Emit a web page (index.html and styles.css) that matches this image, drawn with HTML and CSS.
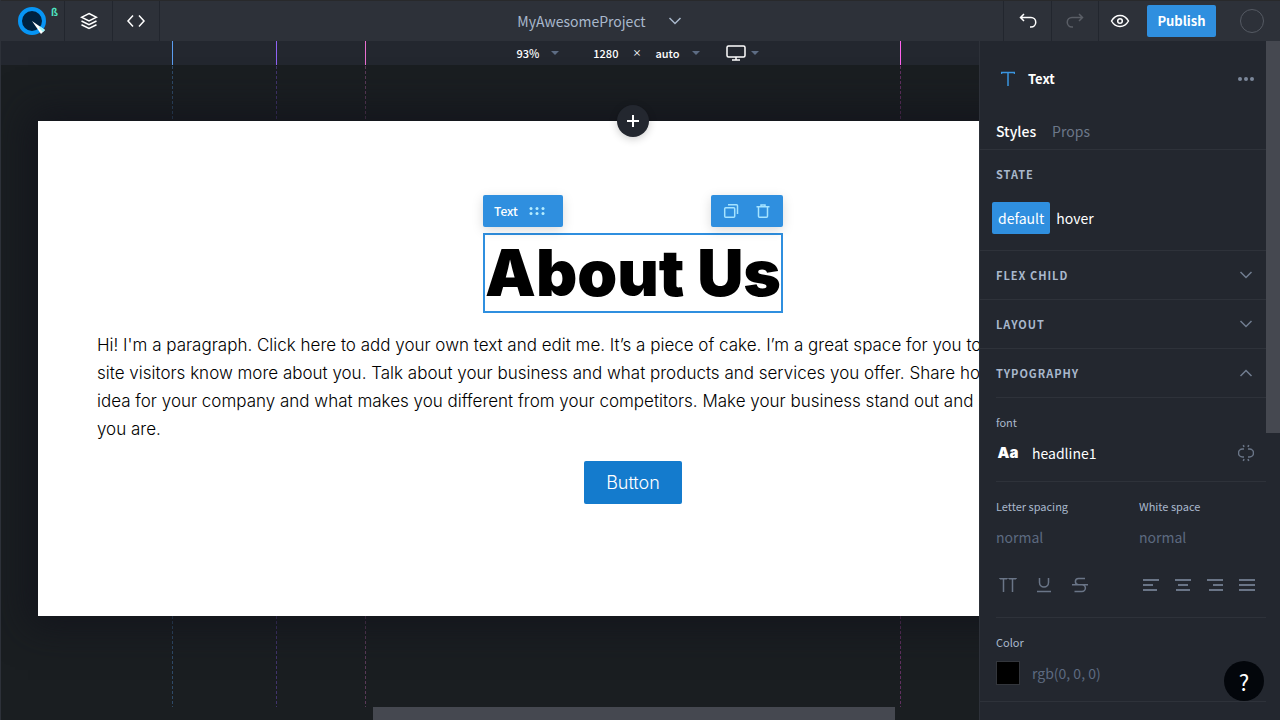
FILE: index.html
```html
<!DOCTYPE html>
<html lang="en">
<head>
    <meta charset="UTF-8" />
    <meta name="viewport" content="width=device-width, initial-scale=1" />
    <title>MyAwesomeProject</title>
    <link rel="stylesheet" href="styles.css">
</head>
<body>

<header class="topbar">
    <a class="logo" href="#" aria-label="Home">
        <svg width="32" height="32" viewBox="0 0 32 32">
            <circle cx="16" cy="16" r="12" fill="#00213f" stroke="#0795f5" stroke-width="4" />
            <path d="M16 16l13 9-4 4z" fill="#fff" />
            <path d="M24 21.500l5 3.500-2 2-4-4z" fill="#9df6fa" />
        </svg>
        <span class="beta">ß</span>
    </a>
    <button class="tool layers" aria-label="Layers">
        <svg width="18" height="18" viewBox="0 0 18 18">
            <path d="M9 1.500l7.500 3.750L9 9 1.500 5.250zM1.500 9L9 12.750 16.500 9M1.500 12.750L9 16.500l7.500-3.750" />
        </svg>
    </button>
    <button class="tool code" aria-label="Code">
        <svg width="20" height="16" viewBox="0 0 20 16">
            <path d="M7 2.500L2 8l5 5.500M13 2.500L18 8l-5 5.500" />
        </svg>
    </button>

    <div class="project">
        <button class="project-name">MyAwesomeProject</button>
        <svg class="project-arrow" width="14" height="8" viewBox="0 0 14 8">
            <path d="M1.500 1L7 6.500 12.500 1" />
        </svg>
    </div>

    <button class="tool undo" aria-label="Undo">
        <svg width="18" height="16" viewBox="0 0 18 16">
            <path d="M5 1L1.500 4.500 5 8M1.500 4.500H12a4.500 4.500 0 0 1 0 9.500h-1" />
        </svg>
    </button>
    <button class="tool redo" aria-label="Redo" disabled>
        <svg width="18" height="16" viewBox="0 0 18 16">
            <path d="M13 1l3.500 3.500L13 8M16.500 4.500H6A4.500 4.500 0 0 0 6 14h1" />
        </svg>
    </button>
    <button class="tool preview" aria-label="Preview">
        <svg width="20" height="14" viewBox="0 0 20 14">
            <path d="M1.500 7C3.500 3.500 6.500 1.500 10 1.500S16.500 3.500 18.500 7c-2 3.500-5 5.500-8.500 5.500S3.500 10.500 1.500 7z" />
            <circle cx="10" cy="7" r="2.300" />
        </svg>
    </button>
    <button class="publish">Publish</button>
    <button class="avatar" aria-label="Account"></button>
</header>

<div class="sizebar">
    <button class="size-item zoom">93%<i class="caret"></i></button>
    <div class="size-item dims">
        <span>1280</span>
        <span class="times">×</span>
        <button class="size-item">auto<i class="caret"></i></button>
    </div>
    <button class="size-item device" aria-label="Device">
        <svg width="20" height="16" viewBox="0 0 20 16">
            <rect x="1" y="1" width="18" height="11" rx="1.500" />
            <path d="M10 12v2.500M6 15h8" />
        </svg>
        <i class="caret"></i>
    </button>
</div>

<main class="stage">
    <div class="guide guide-blue"></div>
    <div class="guide guide-violet"></div>
    <div class="guide guide-pink"></div>
    <div class="guide guide-magenta"></div>

    <section class="frame">
        <button class="add" aria-label="Add section">
            <svg width="12" height="12" viewBox="0 0 12 12"><path d="M6 0v12M0 6h12" /></svg>
        </button>

        <div class="selected">
            <div class="tag">
                Text
                <svg width="16" height="8" viewBox="0 0 16 8">
                    <circle cx="2" cy="1.500" r="1.500" /><circle cx="8" cy="1.500" r="1.500" /><circle cx="14" cy="1.500" r="1.500" />
                    <circle cx="2" cy="6.500" r="1.500" /><circle cx="8" cy="6.500" r="1.500" /><circle cx="14" cy="6.500" r="1.500" />
                </svg>
            </div>
            <div class="actions">
                <button aria-label="Duplicate">
                    <svg width="16" height="16" viewBox="0 0 16 16">
                        <rect x="1.700" y="4.700" width="10" height="9.600" rx="1" />
                        <path d="M5 1.700h8.500a1 1 0 0 1 1 1V11" />
                    </svg>
                </button>
                <button aria-label="Delete">
                    <svg width="16" height="16" viewBox="0 0 16 16">
                        <path d="M1.500 3.700h13M3.500 4v9.300a1 1 0 0 0 1 1h7a1 1 0 0 0 1-1V4M6 3.500V2h4v1.500" />
                    </svg>
                </button>
            </div>
            <h1>About Us</h1>
        </div>

        <p>
            Hi! I'm a paragraph. Click here to add your own text and edit me. It’s a piece of cake. I’m a great space for you to tell your story and let your<br />
            site visitors know more about you. Talk about your business and what products and services you offer. Share how you came up with the<br />
            idea for your company and what makes you different from your competitors. Make your business stand out and show your visitors who<br />
            you are.
        </p>

        <button class="cta">Button</button>
    </section>
</main>
<div class="hscroll"><div class="hthumb"></div></div>

<aside class="panel">
    <div class="panel-body">
        <div class="panel-head">
            <svg width="14" height="16" viewBox="0 0 14 16"><path d="M.5 3V1.500h13V3M7 1.500V15" /></svg>
            <strong>Text</strong>
            <button class="more" aria-label="More">
                <svg width="16" height="4" viewBox="0 0 16 4">
                    <circle cx="2" cy="2" r="2" /><circle cx="8" cy="2" r="2" /><circle cx="14" cy="2" r="2" />
                </svg>
            </button>
        </div>

        <nav class="tabs">
            <a class="active" href="#styles">Styles</a>
            <a href="#props">Props</a>
        </nav>

        <section class="state">
            <h2>State</h2>
            <div class="states">
                <button class="on">default</button>
                <button>hover</button>
            </div>
        </section>

        <button class="fold">Flex child
            <svg width="14" height="8" viewBox="0 0 14 8"><path d="M1.500 1L7 6.500 12.500 1" /></svg>
        </button>
        <button class="fold">Layout
            <svg width="14" height="8" viewBox="0 0 14 8"><path d="M1.500 1L7 6.500 12.500 1" /></svg>
        </button>
        <button class="fold open">Typography
            <svg width="14" height="8" viewBox="0 0 14 8"><path d="M1.500 7L7 1.500 12.500 7" /></svg>
        </button>

        <section class="typo">
            <div class="group">
                <label for="font">font</label>
                <div class="row font-row">
                    <span class="aa">Aa</span>
                    <input class="bright" id="font" type="text" value="headline1" />
                    <button aria-label="Unlink">
                        <svg width="16" height="18" viewBox="0 0 16 18">
                            <path d="M6 5H4.500a4 4 0 0 0 0 8H6M10 5h1.500a4 4 0 0 1 0 8H10M5.300 1l.7 2M10.700 1L10 3M5.300 17l.7-2M10.700 17l-.7-2" />
                        </svg>
                    </button>
                </div>
            </div>

            <div class="group spacing">
                <div class="pair">
                    <div>
                        <label for="letter">Letter spacing</label>
                        <input id="letter" type="text" value="normal" />
                    </div>
                    <div>
                        <label for="white">White space</label>
                        <input id="white" type="text" value="normal" />
                    </div>
                </div>
                <div class="icons">
                    <div class="decor">
                        <button aria-label="Uppercase"><svg width="18" height="16" viewBox="0 0 18 16"><path d="M1 2V1.700h7V2M4.500 1.700V15M10 2V1.700h7V2M13.500 1.700V15" /></svg></button>
                        <button aria-label="Underline"><svg width="18" height="16" viewBox="0 0 18 16"><path d="M4.500 1v4.500a4.500 4.500 0 0 0 9 0V1M2 14.500h14" /></svg></button>
                        <button aria-label="Strikethrough"><svg width="18" height="16" viewBox="0 0 18 16"><path d="M14 1.500H7.500a3 3 0 0 0 0 6.200H11a3 3 0 0 1 0 6.800H3.500M1 7.700h16" /></svg></button>
                    </div>
                    <div class="align">
                        <button aria-label="Align left"><svg width="16" height="14" viewBox="0 0 16 14"><path d="M0 2h16M0 7h10M0 12h14" /></svg></button>
                        <button aria-label="Align center"><svg width="16" height="14" viewBox="0 0 16 14"><path d="M0 2h16M3 7h10M1 12h14" /></svg></button>
                        <button aria-label="Align right"><svg width="16" height="14" viewBox="0 0 16 14"><path d="M0 2h16M6 7h10M2 12h14" /></svg></button>
                        <button aria-label="Justify"><svg width="16" height="14" viewBox="0 0 16 14"><path d="M0 2h16M0 7h16M0 12h16" /></svg></button>
                    </div>
                </div>
            </div>

            <div class="group">
                <label for="color">Color</label>
                <div class="row">
                    <span class="swatch"></span>
                    <input id="color" type="text" value="rgb(0, 0, 0)" />
                </div>
            </div>
        </section>
    </div>
    <div class="vscroll"><div class="vthumb"></div></div>
</aside>

<button class="help" aria-label="Help">?</button>

</body>
</html>
```
FILE: styles.css
```css
* {
    box-sizing: border-box;
}

body {
    margin: 0;
    height: 100vh;
    display: flex;
    flex-direction: column;
    overflow: hidden;
    position: relative;
    background-color: #1a1e21;
    border-left: 1px solid #2d3139;
    color: #fff;
    font-family: "Noto Sans CJK SC", "Open Sans", sans-serif;
    font-size: 14px;
    line-height: 20px;
}

button,
input {
    background: none;
    border: 0;
    padding: 0;
    margin: 0;
    color: inherit;
    font: inherit;
}

button {
    cursor: pointer;
}

svg {
    display: block;
    flex: none;
    fill: none;
    stroke: currentColor;
    stroke-width: 1.5px;
}

/* top bar */
.topbar {
    display: flex;
    align-items: stretch;
    flex: none;
    height: 41px;
    border-top: 1px solid #28292b;
    background-color: #2d3139;
}

.logo {
    display: flex;
    width: 64px;
    padding: 4px 0 0 15px;
    border-right: 1px solid #22262e;
    text-decoration: none;
}

.logo svg {
    stroke: none;
}

.beta {
    margin-left: 3px;
    color: #4fe3c1;
    font-size: 10px;
    font-weight: bold;
    line-height: 14px;
}

.tool {
    display: flex;
    align-items: center;
    justify-content: center;
    width: 48px;
    border-right: 1px solid #22262e;
}

.code {
    width: 47px;
}

.project {
    flex: 1;
    display: grid;
    grid-template-columns: 1fr auto 1fr;
    align-items: center;
    border-right: 1px solid #22262e;
    color: #a9b8cc;
}

.project-name {
    grid-column: 2;
    font-size: 14px;
}

.project-arrow {
    margin-left: 22px;
}

.redo {
    width: 47px;
    color: #5a5e66;
}

.preview {
    width: 42px;
    border-right: 0;
}

.publish {
    width: 69px;
    height: 32px;
    margin: 4px 16px 0 6px;
    border-radius: 2px;
    background-color: #2f8fdf;
    font-size: 13px;
    font-weight: bold;
}

.avatar {
    width: 24px;
    height: 24px;
    margin: 8px 16px 0 8px;
    border: 1px solid #555a63;
    border-radius: 50%;
}

/* zoom and screen size */
.sizebar {
    display: flex;
    align-items: center;
    justify-content: center;
    gap: 34px;
    flex: none;
    height: 24px;
    padding-right: 6px;
    background-color: #23272f;
    font-size: 11px;
    font-weight: 500;
}

.size-item {
    display: flex;
    align-items: center;
    gap: 12px;
}

.dims {
    gap: 14px;
}

.times {
    font-size: 9px;
}

.sizebar .device {
    gap: 5px;
    margin-left: -8px;
}

.caret {
    border: 4px solid transparent;
    border-top-color: #5d6c84;
    border-bottom: 0;
}

/* canvas */
.stage {
    flex: 1;
    position: relative;
    min-height: 0;
    margin-right: 14px;
    padding: 56px 38px 0 37px;
}

.guide {
    position: absolute;
    top: -24px;
    bottom: 0;
    width: 1px;
    background: linear-gradient(var(--line) 24px, transparent 24px),
        repeating-linear-gradient(var(--dash) 0 3px, transparent 3px 5px);
}

.guide-blue {
    --line: #5b9df0;
    --dash: #2f4a68;
    left: 171px;
}

.guide-violet {
    --line: #8f62f5;
    --dash: #41346c;
    left: 275px;
}

.guide-pink {
    --line: #e86fd0;
    --dash: #5a3a58;
    left: 364px;
}

.guide-magenta {
    --line: #ff63ee;
    --dash: #622f61;
    left: 899px;
}

.frame {
    position: relative;
    display: flex;
    flex-direction: column;
    align-items: center;
    gap: 18px;
    padding: 112px 59px;
    background-color: #fff;
    box-shadow: 0 0 36px 10px rgba(18, 19, 28, 0.8);
    color: #000;
    font-family: Inter, sans-serif;
}

.frame p {
    align-self: stretch;
    margin: 0;
    font-size: 17px;
    font-weight: 300;
    line-height: 28px;
    white-space: nowrap;
}

.add {
    position: absolute;
    top: -16px;
    left: calc(50% - 16px);
    display: flex;
    align-items: center;
    justify-content: center;
    width: 32px;
    height: 32px;
    border-radius: 50%;
    background-color: #23272f;
    box-shadow: 0 2px 8px rgba(0, 0, 0, 0.2);
    color: #fff;
}

.add svg {
    stroke-width: 2px;
}

.selected {
    position: relative;
    border: 2px solid #2f8fdf;
}

.selected h1 {
    margin: 0;
    font-size: 64px;
    font-weight: 900;
    line-height: 76px;
}

.tag,
.actions {
    position: absolute;
    top: -40px;
    display: flex;
    align-items: center;
    height: 32px;
    border-radius: 2px;
    background-color: #2f8fdf;
    box-shadow: 0 3px 12px rgba(0, 0, 0, 0.15);
    color: #fff;
}

.tag {
    left: -2px;
    gap: 11px;
    width: 80px;
    padding-left: 11px;
    font-family: "Noto Sans CJK SC", "Open Sans", sans-serif;
    font-size: 12px;
    font-weight: 500;
}

.tag svg {
    fill: #b5edff;
    stroke: none;
}

.actions {
    right: -2px;
    gap: 16px;
    padding: 0 12px;
    color: #a5e3ff;
}

.cta {
    height: 43px;
    padding: 0 22px;
    border-radius: 2px;
    background-color: #147bcd;
    color: #fff;
    font-size: 18px;
    font-weight: 300;
}

.hscroll {
    flex: none;
    height: 13px;
    margin-right: 14px;
}

.hthumb {
    width: 522px;
    height: 13px;
    margin: 0 auto;
    background-color: #454850;
}

/* right panel, over the canvas */
.panel {
    position: absolute;
    top: 41px;
    right: 0;
    bottom: 0;
    display: flex;
    width: 301px;
    border-left: 1px solid #2d3139;
    background-color: #23272f;
}

.panel-body {
    flex: 1;
    overflow: hidden;
}

.vscroll {
    width: 14px;
}

.vthumb {
    height: 392px;
    background-color: #454850;
}

.panel-head {
    display: flex;
    align-items: center;
    gap: 13px;
    height: 76px;
    padding: 0 12px 0 21px;
    color: #3a95e0;
    font-size: 13px;
}

.panel-head strong {
    color: #fff;
}

.more {
    margin-left: auto;
    color: #7b879a;
}

.more svg {
    fill: currentColor;
    stroke: none;
}

.tabs {
    display: flex;
    gap: 16px;
    height: 33px;
    padding: 4px 16px 0;
    border-bottom: 1px solid #2e323a;
}

.tabs a {
    color: #6c7789;
    text-decoration: none;
}

.tabs .active {
    color: #fff;
    font-weight: 500;
}

.state {
    height: 101px;
    border-bottom: 1px solid #2e323a;
}

.state h2,
.fold {
    display: flex;
    align-items: center;
    justify-content: space-between;
    width: 100%;
    height: 49px;
    margin: 0;
    padding: 0 13px 0 16px;
    border-bottom: 1px solid #2e323a;
    color: #a9b8cc;
    font-size: 11px;
    font-weight: bold;
    letter-spacing: 1px;
    text-transform: uppercase;
}

.state h2 {
    height: 47px;
    border-bottom: 0;
}

.fold svg {
    color: #717d90;
}

.fold.open {
    height: 48px;
    border-bottom: 0;
}

.states {
    display: flex;
    padding: 5px 12px 0;
}

.states button {
    height: 32px;
    padding: 0 6px;
    border-radius: 2px;
}

.states .on {
    background-color: #2f8fdf;
}

.group {
    height: 84px;
    margin-left: 16px;
    padding-top: 14px;
    border-top: 1px solid #2e323a;
}

.group label {
    display: block;
    color: #a9b8cc;
    font-size: 11px;
}

.group input {
    width: 100%;
    min-width: 0;
    height: 24px;
    color: #5d6a80;
}

.group .bright {
    color: #fff;
}

.row {
    display: flex;
    align-items: center;
    gap: 12px;
    margin-top: 9px;
    padding-right: 12px;
}

.font-row {
    color: #6a7587;
}

.aa {
    flex: none;
    width: 24px;
    color: #fff;
    text-align: center;
    font-family: Inter, sans-serif;
    font-size: 15px;
    font-weight: 900;
}

.spacing {
    height: 136px;
}

.pair {
    display: grid;
    grid-template-columns: 1fr 1fr;
    column-gap: 16px;
}

.pair input {
    margin-top: 9px;
}

.pair label {
    white-space: nowrap;
}

.icons {
    display: flex;
    justify-content: space-between;
    align-items: center;
    height: 32px;
    margin-top: 20px;
    padding: 0 11px 0 3px;
    color: #6a7587;
}

.decor {
    display: flex;
    gap: 18px;
}

.align {
    display: flex;
    align-items: center;
    gap: 16px;
}

.align svg {
    stroke-width: 2px;
}

.typo {
    border-bottom: 1px solid #2e323a;
}

.swatch {
    flex: none;
    width: 24px;
    height: 24px;
    border: 1px solid #33363c;
    background-color: #000;
}

.help {
    position: absolute;
    right: 16px;
    bottom: 19px;
    width: 40px;
    height: 40px;
    border-radius: 50%;
    background-color: #03060b;
    font-size: 22px;
}
```
